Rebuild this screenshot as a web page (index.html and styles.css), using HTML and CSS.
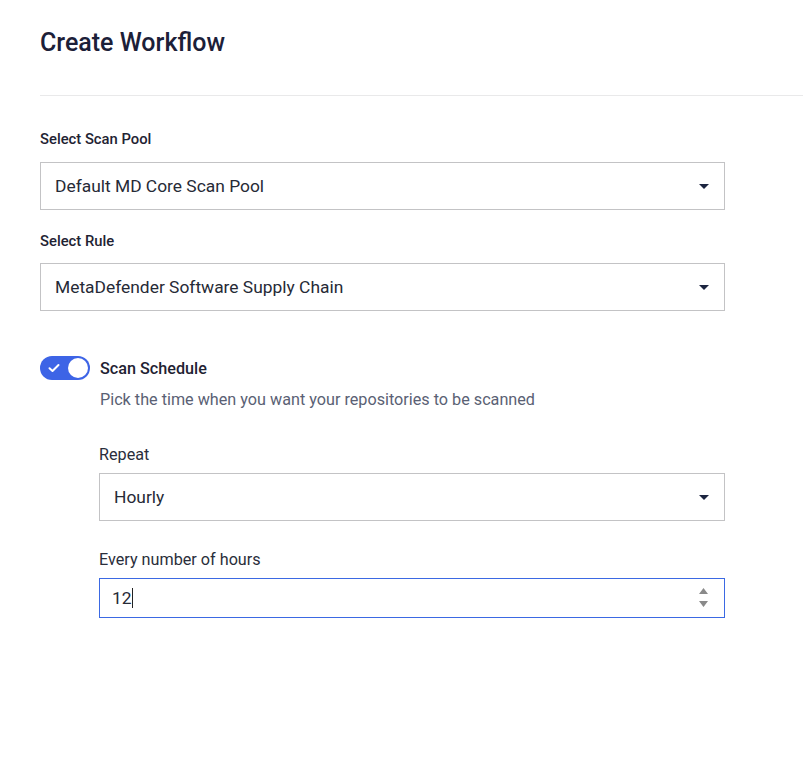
FILE: index.html
```html
<html>
  <head>
    <title>Create Workflow</title>
    <link rel="stylesheet" href="styles.css">
  </head>
  <body>
    <header class="page-head">
      <h1>Create Workflow</h1>
    </header>
    <section class="form">
      <div class="field">
        <label class="label">Select Scan Pool</label>
        <div class="select">
          <span>Default MD Core Scan Pool</span>
          <svg class="caret" viewBox="0 0 10 5"><path d="M0 0h10L5 5z" /></svg>
        </div>
      </div>
      <div class="field">
        <label class="label tight">Select Rule</label>
        <div class="select">
          <span>MetaDefender Software Supply Chain</span>
          <svg class="caret" viewBox="0 0 10 5"><path d="M0 0h10L5 5z" /></svg>
        </div>
      </div>

      <div class="schedule">
        <div class="switch-row">
          <span class="switch">
            <svg class="check" viewBox="0 0 12 10"><path d="M1.5 5.2 4.5 8 10.5 2" /></svg>
            <span class="knob"></span>
          </span>
          <span class="switch-title">Scan Schedule</span>
        </div>
        <p class="hint">Pick the time when you want your repositories to be scanned</p>

        <div class="sub">
          <div class="field">
            <label class="label plain">Repeat</label>
            <div class="select">
              <span>Hourly</span>
              <svg class="caret" viewBox="0 0 10 5"><path d="M0 0h10L5 5z" /></svg>
            </div>
          </div>
          <div class="field">
            <label class="label plain">Every number of hours</label>
            <div class="number">
              <span>12<i class="cursor"></i></span>
              <svg class="spin" viewBox="0 0 9 20"><path d="M4.5 0 9 6H0z M0 13h9l-4.5 6z" /></svg>
            </div>
          </div>
        </div>
      </div>
    </section>
  </body>
</html>
```

FILE: styles.css
```css
body { margin: 0; background: #fff; font-family: Roboto, "Noto Sans", sans-serif; color: #23283a; }
.page-head {
  margin-left: 40px;
  padding: 29px 0 38px;
  border-bottom: 1px solid #e9e9ea;
}
.page-head h1 {
  margin: 0;
  font-size: 25px;
  line-height: 28px;
  font-weight: 500;
  color: #1c2038;
}
.form {
  width: 685px;
  margin-left: 40px;
  padding-top: 33px;
}
.field { margin-bottom: 21px; }
.label {
  display: block;
  font-size: 14.8px;
  line-height: 20px;
  font-weight: 500;
  color: #1f2333;
  margin-bottom: 13px;
}
.label.tight { margin-bottom: 12px; }
.label.plain {
  font-size: 16.2px;
  font-weight: 400;
  color: #2a2e3b;
  margin-bottom: 8px;
}
.select, .number {
  display: flex;
  align-items: center;
  justify-content: space-between;
  box-sizing: border-box;
  height: 48px;
  padding: 0 15px 0 14px;
  border: 1px solid #c3c3c5;
  font-size: 17.4px;
  color: #262a36;
}
.caret { width: 10px; height: 5px; fill: #1c2540; }
.number {
  height: 40px;
  border-color: #3b69e3;
  padding-left: 12px;
}
.cursor {
  display: inline-block;
  width: 1px;
  height: 20px;
  background: #222;
  vertical-align: -4px;
}
.spin { width: 9px; height: 20px; fill: #8a8a8a; margin-right: 1px; }
.schedule { padding-top: 24px; }
.switch-row { display: flex; align-items: center; gap: 10px; }
.switch {
  position: relative;
  display: flex;
  align-items: center;
  box-sizing: border-box;
  width: 50px;
  height: 24px;
  padding: 0 2px 0 8px;
  border-radius: 12px;
  background: #3d64e6;
  justify-content: space-between;
}
.check { width: 12px; height: 10px; fill: none; stroke: #fff; stroke-width: 2; stroke-linecap: round; stroke-linejoin: round; }
.knob { width: 20px; height: 20px; border-radius: 50%; background: #fff; }
.switch-title { font-size: 16.2px; font-weight: 500; color: #1f2333; }
.hint {
  margin: 10px 0 0 60px;
  font-size: 16.2px;
  line-height: 20px;
  color: #5a6174;
}
.sub { margin: 35px 0 0 59px; }
.sub .field { margin-bottom: 29px; }
```
